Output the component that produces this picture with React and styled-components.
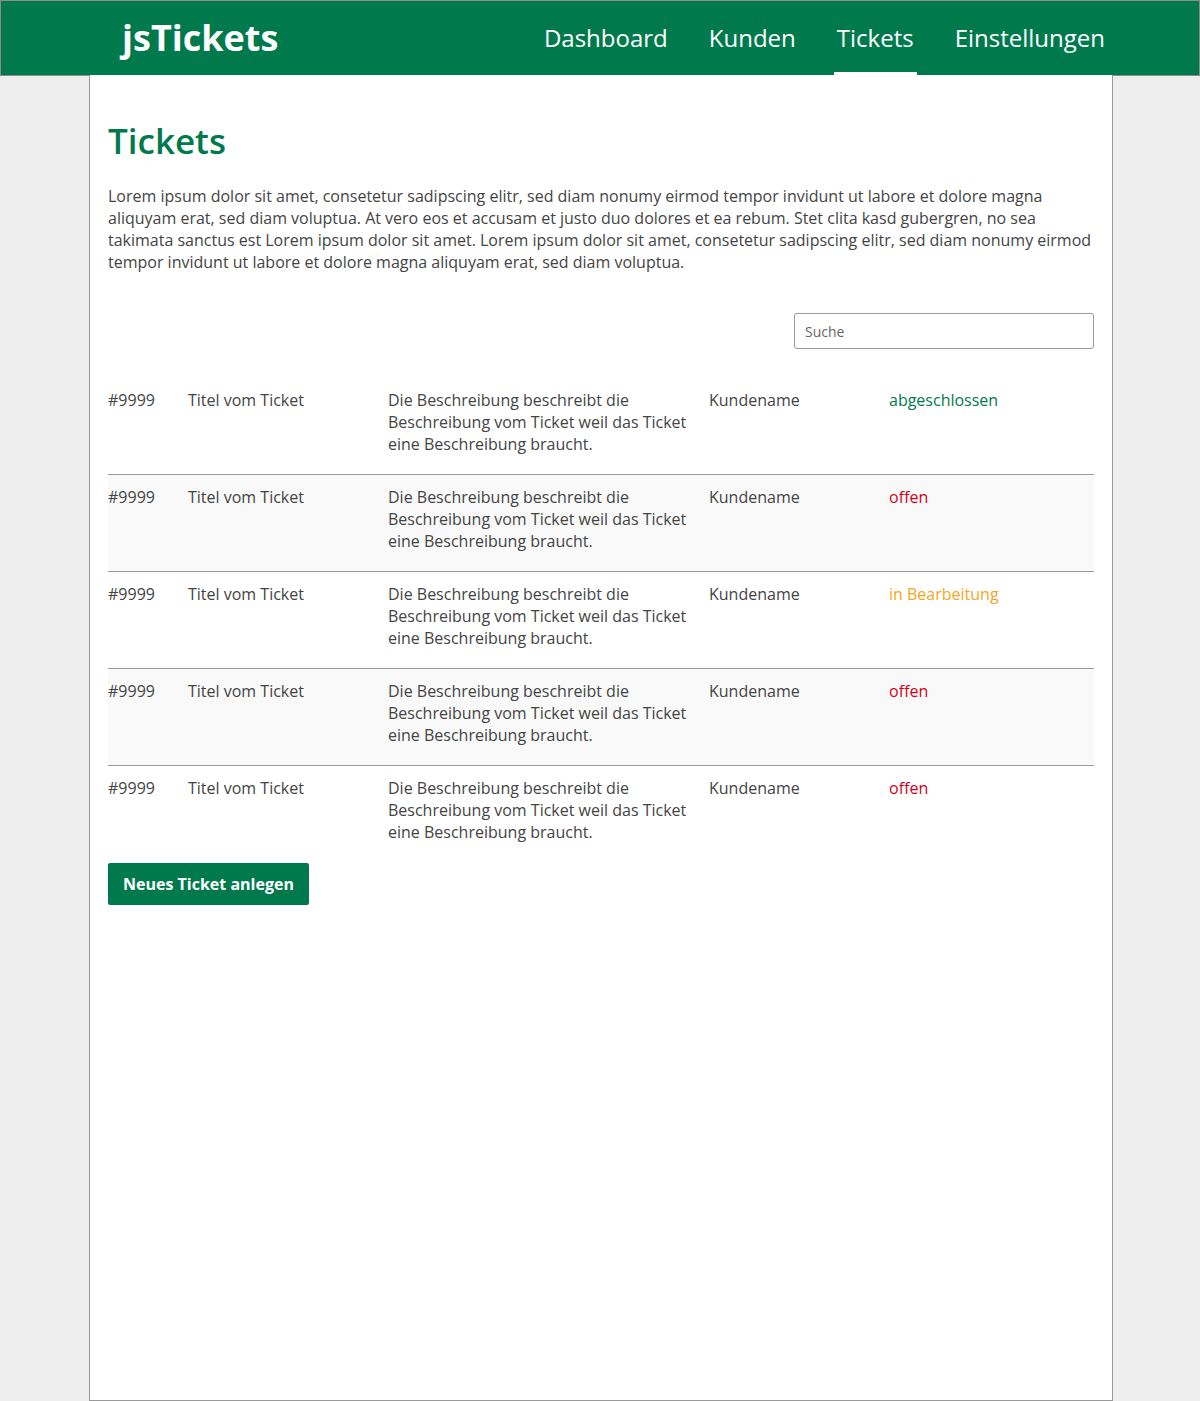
import React from "react";
import styled, { createGlobalStyle } from "styled-components";

const green = "#007a4d";

const GlobalStyle = createGlobalStyle`
  html, body {
    margin: 0;
    padding: 0;
    background: #eeeeee;
    font-family: "Open Sans", "Liberation Sans", sans-serif;
    color: #444;
  }
  * { box-sizing: border-box; }
`;

const Header = styled.header`
  height: 76px;
  background: ${green};
  border: 1px solid #8c8c8c;
  display: flex;
  justify-content: center;
  padding-left: 2px;
`;

const HeaderInner = styled.div`
  width: 1024px;
  display: flex;
  align-items: stretch;
  justify-content: space-between;
  padding: 0 5px 0 33px;
`;

const Logo = styled.div`
  color: #fff;
  font-size: 36px;
  font-weight: 700;
  display: flex;
  align-items: center;
  padding-bottom: 1px;
`;

const Nav = styled.nav`
  display: flex;
  gap: 35px;
`;

const NavLink = styled.a`
  color: #fff;
  font-size: 24px;
  display: flex;
  align-items: center;
  padding: 3px 3px 2px;
  text-decoration: none;
  border-bottom: 4px solid ${(p) => (p.$active ? "#fff" : "transparent")};
  margin-bottom: -1px;
`;

const PageWrap = styled.div`
  padding-left: 2px;
`;

const Page = styled.main`
  width: 1024px;
  min-height: 1326px;
  margin: -1px auto 0;
  background: #fff;
  border: 1px solid #999;
  border-top: none;
  padding: 44px 18px 40px;
`;

const Title = styled.h1`
  margin: 0;
  color: ${green};
  font-size: 35px;
  font-weight: 600;
  line-height: 44px;
`;

const Intro = styled.p`
  margin: 22px 0 0;
  font-size: 16px;
  line-height: 22px;
  color: #444;
`;

const Toolbar = styled.div`
  display: flex;
  justify-content: flex-end;
  margin-top: 40px;
`;

const Search = styled.input`
  width: 300px;
  height: 36px;
  border: 1px solid #999;
  border-radius: 3px;
  padding: 0 10px;
  font-family: inherit;
  font-size: 14px;
  color: #444;
  &::placeholder { color: #666; }
`;

const Table = styled.div`
  margin-top: 29px;
`;

const Row = styled.div`
  display: grid;
  grid-template-columns: 80px 200px 321px 180px 1fr;
  padding: 11px 0 19px;
  background: ${(p) => (p.$shaded ? "#f9f9f9" : "#fff")};
  border-bottom: 1px solid #999;
  font-size: 16px;
  line-height: 22px;
  &:last-child {
    border-bottom: none;
  }
`;

const Cell = styled.div`
  padding-right: 20px;
`;

const statusColors = {
  abgeschlossen: green,
  offen: "#d0021b",
  "in Bearbeitung": "#f5a623",
};

const Status = styled.div`
  color: ${(p) => p.$color};
`;

const Button = styled.button`
  margin-top: 1px;
  height: 42px;
  padding: 0 15px;
  background: ${green};
  color: #fff;
  border: none;
  border-radius: 2px;
  font-family: inherit;
  font-size: 16px;
  font-weight: 700;
  cursor: pointer;
`;

const tickets = ["abgeschlossen", "offen", "in Bearbeitung", "offen", "offen"];

export default function App() {
  return (
    <>
      <GlobalStyle />
      <Header>
        <HeaderInner>
          <Logo>jsTickets</Logo>
          <Nav>
            <NavLink>Dashboard</NavLink>
            <NavLink>Kunden</NavLink>
            <NavLink $active>Tickets</NavLink>
            <NavLink>Einstellungen</NavLink>
          </Nav>
        </HeaderInner>
      </Header>
      <PageWrap>
        <Page>
          <Title>Tickets</Title>
          <Intro>
            Lorem ipsum dolor sit amet, consetetur sadipscing elitr, sed diam nonumy eirmod tempor invidunt ut labore et dolore magna
            aliquyam erat, sed diam voluptua. At vero eos et accusam et justo duo dolores et ea rebum. Stet clita kasd gubergren, no sea
            takimata sanctus est Lorem ipsum dolor sit amet. Lorem ipsum dolor sit amet, consetetur sadipscing elitr, sed diam nonumy eirmod
            tempor invidunt ut labore et dolore magna aliquyam erat, sed diam voluptua.
          </Intro>
          <Toolbar>
            <Search placeholder="Suche" />
          </Toolbar>
          <Table>
            {tickets.map((s, i) => (
              <Row key={i} $shaded={i % 2 === 1}>
                <Cell>#9999</Cell>
                <Cell>Titel vom Ticket</Cell>
                <Cell>Die Beschreibung beschreibt die Beschreibung vom Ticket weil das Ticket eine Beschreibung braucht.</Cell>
                <Cell>Kundename</Cell>
                <Status $color={statusColors[s]}>{s}</Status>
              </Row>
            ))}
          </Table>
          <Button>Neues Ticket anlegen</Button>
        </Page>
      </PageWrap>
    </>
  );
}
